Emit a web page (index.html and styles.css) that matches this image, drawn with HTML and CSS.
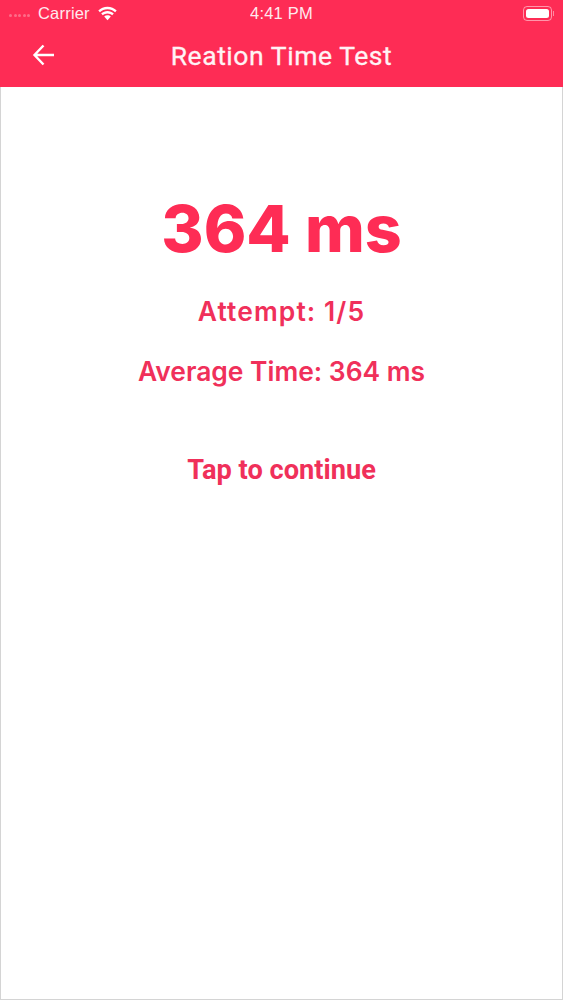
FILE: index.html
```html
<!DOCTYPE html>
<html lang="en">
<head>
<meta charset="utf-8">
<title>Reation Time Test</title>
<link rel="stylesheet" href="styles.css">
</head>
<body>
<div class="screen">
  <header class="header">
    <div class="status">
      <div class="status-left">
        <div class="signal"><i></i><i></i><i></i><i></i><i></i></div>
        <span class="carrier">Carrier</span>
        <svg class="wifi" width="21" height="15" viewBox="0 0 21 15"><path d="M10.5 3.2c3 0 5.6 1.2 7.6 3.1l1.6-1.8C17.3 2.2 14.1.8 10.5.8S3.700 2.200 1.300 4.500l1.600 1.800c2-1.900 4.600-3.100 7.600-3.100z" fill="#fff"/><path d="M10.500 7.400c1.800 0 3.400.7 4.700 1.800l1.600-1.800c-1.700-1.500-3.900-2.400-6.300-2.400s-4.600.9-6.300 2.400l1.600 1.800c1.300-1.100 2.900-1.800 4.700-1.800z" fill="#fff"/><path d="M10.500 9.300c-1.300 0-2.400.5-3.300 1.200l3.300 3.700 3.300-3.700c-.9-.7-2-1.200-3.300-1.200z" fill="#fff"/></svg>
      </div>
      <span class="clock">4:41 PM</span>
      <div class="battery"><div class="battery-body"><div class="battery-fill"></div></div><div class="battery-cap"></div></div>
    </div>
    <div class="nav">
      <svg class="back" width="24" height="24" viewBox="0 0 24 24"><path d="M22 12H3M11.500 2.500L2.500 12l9 9.500" fill="none" stroke="#fff" stroke-width="2.400"/></svg>
      <h1 class="title">Reation Time Test</h1>
    </div>
  </header>
  <main class="content">
    <div class="time">364 ms</div>
    <div class="stat stat-attempt">Attempt: 1/5</div>
    <div class="stat stat-average">Average Time: 364 ms</div>
    <div class="continue">Tap to continue</div>
  </main>
</div>
</body>
</html>
```
FILE: styles.css
```css
* { box-sizing: border-box; }
html, body { margin: 0; padding: 0; }
body { width: 563px; height: 1000px; background: #fff; font-family: "Inter", "Liberation Sans", sans-serif; overflow: hidden; }
.screen { width: 563px; height: 1000px; display: flex; flex-direction: column; border: 1px solid #d4d4d4; border-top: 0; background: #fff; }
.header { height: 87px; margin: 0 -1px; background: #fe2c55; color: #fff; flex: none; }
.status { height: 27px; display: flex; align-items: center; justify-content: space-between; position: relative; padding: 0 9px 0 9px; }
.status-left { display: flex; align-items: center; }
.signal { display: flex; gap: 1.500px; width: 24px; opacity: .3; margin-top: 4px; }
.signal i { width: 3px; height: 3px; border-radius: 50%; background: #fff; }
.carrier { font: 400 16.500px "Liberation Sans", sans-serif; margin-left: 5px; letter-spacing: .2px; opacity: .9; }
.wifi { margin-left: 7px; margin-top: -1px; }
.clock { position: absolute; left: 0; right: 0; text-align: center; font: 400 16.500px "Liberation Sans", sans-serif; letter-spacing: .2px; opacity: .9; }
.battery { display: flex; align-items: center; margin-top: -1px; }
.battery-body { width: 29px; height: 15px; border: 1px solid rgba(255,255,255,.5); border-radius: 4px; padding: 2px; }
.battery-fill { height: 100%; background: #fff; border-radius: 2.500px; }
.battery-cap { width: 1.500px; height: 5px; background: rgba(255,255,255,.45); margin-left: 1px; }
.nav { height: 60px; display: flex; align-items: center; justify-content: center; position: relative; padding-bottom: 3px; }
.back { position: absolute; left: 32px; top: 16px; }
.title { margin: 0; font: 400 26.500px "Roboto", sans-serif; letter-spacing: .55px; color: #fff3f5; -webkit-text-stroke: .3px #fff3f5; }
.content { flex: 1; display: flex; flex-direction: column; align-items: center; color: #f0305a; }
.time { margin-top: 97px; font-size: 64.500px; line-height: 90px; font-weight: 800; color: #fe2c55; }
.stat { font-size: 26.400px; font-weight: 600; line-height: 36px; }
.stat-attempt { margin-top: 19px; letter-spacing: 1.100px; }
.stat-average { margin-top: 24px; }
.continue { margin-top: 63px; font: 700 27.200px/36px "Roboto", sans-serif; }
```
